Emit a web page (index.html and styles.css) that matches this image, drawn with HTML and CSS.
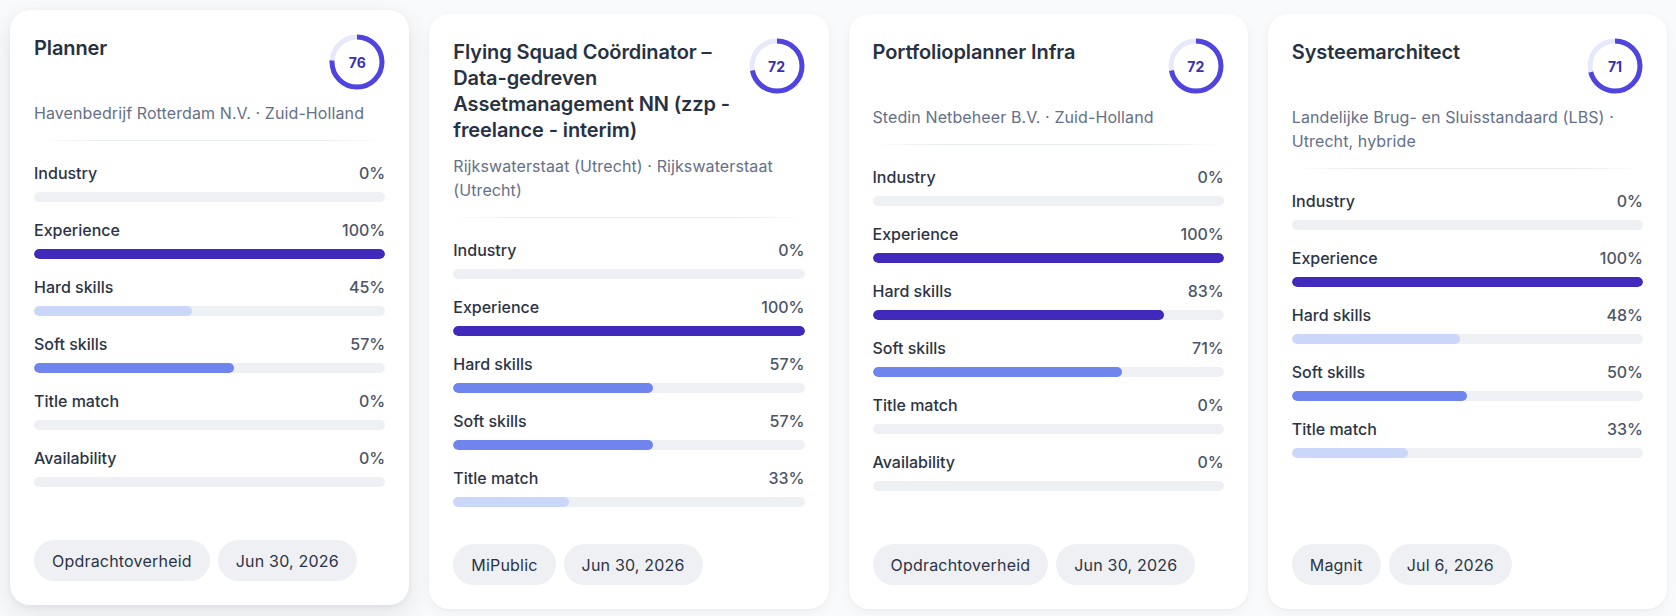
FILE: index.html
```html
<!DOCTYPE html>
<html lang="nl">
<head>
<meta charset="utf-8">
<title>Matches</title>
<link rel="stylesheet" href="styles.css">
</head>
<body>
<main class="board">

  <article class="card card--raised">
    <header class="card-head">
      <h2 class="card-title">Planner</h2>
      <div class="score">
        <svg class="score-ring" viewBox="0 0 56 56">
          <circle class="score-track" cx="28" cy="28" r="25"></circle>
          <circle class="score-arc" cx="28" cy="28" r="25" pathLength="100" stroke-dasharray="76 100"></circle>
        </svg>
        <span class="score-value">76</span>
      </div>
    </header>
    <p class="card-meta">Havenbedrijf Rotterdam N.V. · Zuid-Holland</p>
    <div class="card-rule"></div>
    <ul class="metrics">
      <li class="metric"><div class="metric-row"><span>Industry</span><span class="metric-pct">0%</span></div><div class="metric-track"><div class="metric-fill" style="width:0%"></div></div></li>
      <li class="metric"><div class="metric-row"><span>Experience</span><span class="metric-pct">100%</span></div><div class="metric-track"><div class="metric-fill metric-fill--high" style="width:100%"></div></div></li>
      <li class="metric"><div class="metric-row"><span>Hard skills</span><span class="metric-pct">45%</span></div><div class="metric-track"><div class="metric-fill metric-fill--low" style="width:45%"></div></div></li>
      <li class="metric"><div class="metric-row"><span>Soft skills</span><span class="metric-pct">57%</span></div><div class="metric-track"><div class="metric-fill metric-fill--mid" style="width:57%"></div></div></li>
      <li class="metric"><div class="metric-row"><span>Title match</span><span class="metric-pct">0%</span></div><div class="metric-track"><div class="metric-fill" style="width:0%"></div></div></li>
      <li class="metric"><div class="metric-row"><span>Availability</span><span class="metric-pct">0%</span></div><div class="metric-track"><div class="metric-fill" style="width:0%"></div></div></li>
    </ul>
    <footer class="tags">
      <span class="tag">Opdrachtoverheid</span>
      <span class="tag">Jun 30, 2026</span>
    </footer>
  </article>

  <article class="card">
    <header class="card-head">
      <h2 class="card-title">Flying Squad Coördinator – Data-gedreven Assetmanagement NN (zzp - freelance - interim)</h2>
      <div class="score">
        <svg class="score-ring" viewBox="0 0 56 56">
          <circle class="score-track" cx="28" cy="28" r="25"></circle>
          <circle class="score-arc" cx="28" cy="28" r="25" pathLength="100" stroke-dasharray="72 100"></circle>
        </svg>
        <span class="score-value">72</span>
      </div>
    </header>
    <p class="card-meta">Rijkswaterstaat (Utrecht) · Rijkswaterstaat (Utrecht)</p>
    <div class="card-rule"></div>
    <ul class="metrics">
      <li class="metric"><div class="metric-row"><span>Industry</span><span class="metric-pct">0%</span></div><div class="metric-track"><div class="metric-fill" style="width:0%"></div></div></li>
      <li class="metric"><div class="metric-row"><span>Experience</span><span class="metric-pct">100%</span></div><div class="metric-track"><div class="metric-fill metric-fill--high" style="width:100%"></div></div></li>
      <li class="metric"><div class="metric-row"><span>Hard skills</span><span class="metric-pct">57%</span></div><div class="metric-track"><div class="metric-fill metric-fill--mid" style="width:57%"></div></div></li>
      <li class="metric"><div class="metric-row"><span>Soft skills</span><span class="metric-pct">57%</span></div><div class="metric-track"><div class="metric-fill metric-fill--mid" style="width:57%"></div></div></li>
      <li class="metric"><div class="metric-row"><span>Title match</span><span class="metric-pct">33%</span></div><div class="metric-track"><div class="metric-fill metric-fill--low" style="width:33%"></div></div></li>
    </ul>
    <footer class="tags">
      <span class="tag">MiPublic</span>
      <span class="tag">Jun 30, 2026</span>
    </footer>
  </article>

  <article class="card">
    <header class="card-head">
      <h2 class="card-title">Portfolioplanner Infra</h2>
      <div class="score">
        <svg class="score-ring" viewBox="0 0 56 56">
          <circle class="score-track" cx="28" cy="28" r="25"></circle>
          <circle class="score-arc" cx="28" cy="28" r="25" pathLength="100" stroke-dasharray="72 100"></circle>
        </svg>
        <span class="score-value">72</span>
      </div>
    </header>
    <p class="card-meta">Stedin Netbeheer B.V. · Zuid-Holland</p>
    <div class="card-rule"></div>
    <ul class="metrics">
      <li class="metric"><div class="metric-row"><span>Industry</span><span class="metric-pct">0%</span></div><div class="metric-track"><div class="metric-fill" style="width:0%"></div></div></li>
      <li class="metric"><div class="metric-row"><span>Experience</span><span class="metric-pct">100%</span></div><div class="metric-track"><div class="metric-fill metric-fill--high" style="width:100%"></div></div></li>
      <li class="metric"><div class="metric-row"><span>Hard skills</span><span class="metric-pct">83%</span></div><div class="metric-track"><div class="metric-fill metric-fill--high" style="width:83%"></div></div></li>
      <li class="metric"><div class="metric-row"><span>Soft skills</span><span class="metric-pct">71%</span></div><div class="metric-track"><div class="metric-fill metric-fill--mid" style="width:71%"></div></div></li>
      <li class="metric"><div class="metric-row"><span>Title match</span><span class="metric-pct">0%</span></div><div class="metric-track"><div class="metric-fill" style="width:0%"></div></div></li>
      <li class="metric"><div class="metric-row"><span>Availability</span><span class="metric-pct">0%</span></div><div class="metric-track"><div class="metric-fill" style="width:0%"></div></div></li>
    </ul>
    <footer class="tags">
      <span class="tag">Opdrachtoverheid</span>
      <span class="tag">Jun 30, 2026</span>
    </footer>
  </article>

  <article class="card">
    <header class="card-head">
      <h2 class="card-title">Systeemarchitect</h2>
      <div class="score">
        <svg class="score-ring" viewBox="0 0 56 56">
          <circle class="score-track" cx="28" cy="28" r="25"></circle>
          <circle class="score-arc" cx="28" cy="28" r="25" pathLength="100" stroke-dasharray="71 100"></circle>
        </svg>
        <span class="score-value">71</span>
      </div>
    </header>
    <p class="card-meta">Landelijke Brug- en Sluisstandaard (LBS) · Utrecht, hybride</p>
    <div class="card-rule"></div>
    <ul class="metrics">
      <li class="metric"><div class="metric-row"><span>Industry</span><span class="metric-pct">0%</span></div><div class="metric-track"><div class="metric-fill" style="width:0%"></div></div></li>
      <li class="metric"><div class="metric-row"><span>Experience</span><span class="metric-pct">100%</span></div><div class="metric-track"><div class="metric-fill metric-fill--high" style="width:100%"></div></div></li>
      <li class="metric"><div class="metric-row"><span>Hard skills</span><span class="metric-pct">48%</span></div><div class="metric-track"><div class="metric-fill metric-fill--low" style="width:48%"></div></div></li>
      <li class="metric"><div class="metric-row"><span>Soft skills</span><span class="metric-pct">50%</span></div><div class="metric-track"><div class="metric-fill metric-fill--mid" style="width:50%"></div></div></li>
      <li class="metric"><div class="metric-row"><span>Title match</span><span class="metric-pct">33%</span></div><div class="metric-track"><div class="metric-fill metric-fill--low" style="width:33%"></div></div></li>
    </ul>
    <footer class="tags">
      <span class="tag">Magnit</span>
      <span class="tag">Jul 6, 2026</span>
    </footer>
  </article>

</main>
</body>
</html>
```

FILE: styles.css
```css
* {
  box-sizing: border-box;
}

html, body {
  margin: 0;
  height: 100%;
}

body {
  background: #f9fafb;
  font-family: "Inter", "Noto Sans", sans-serif;
  color: #2b3445;
  -webkit-font-smoothing: antialiased;
}

.board {
  display: grid;
  grid-template-columns: repeat(4, 1fr);
  gap: 20px;
  padding: 14px 9px 7px 10px;
  height: 616px;
}

/* card */
.card {
  display: flex;
  flex-direction: column;
  background: #ffffff;
  border-radius: 20px;
  padding: 24px;
  box-shadow: 0 1px 3px rgba(16, 24, 40, 0.04), 0 4px 14px rgba(16, 24, 40, 0.04);
}

.card--raised {
  transform: translateY(-4px);
  box-shadow: 0 2px 6px rgba(16, 24, 40, 0.05), 0 10px 28px rgba(16, 24, 40, 0.09);
}

.card-head {
  display: flex;
  align-items: flex-start;
  justify-content: space-between;
  gap: 16px;
}

.card-title {
  margin: 0;
  padding-top: 1px;
  font-size: 20px;
  line-height: 26px;
  font-weight: 600;
  letter-spacing: -0.1px;
  color: #283142;
}

/* score ring */
.score {
  position: relative;
  flex: 0 0 56px;
  width: 56px;
  height: 56px;
}

.score-ring {
  display: block;
  width: 56px;
  height: 56px;
  transform: rotate(-90deg);
}

.score-track,
.score-arc {
  fill: none;
  stroke-width: 5;
}

.score-track {
  stroke: #e7e9fb;
}

.score-arc {
  stroke: #4f44e0;
}

.score-value {
  position: absolute;
  inset: 0;
  display: flex;
  align-items: center;
  justify-content: center;
  font-size: 14px;
  font-weight: 700;
  color: #3b2fb5;
}

/* company + place */
.card-meta {
  margin: 11px 0 0;
  font-size: 16px;
  line-height: 24px;
  letter-spacing: 0.1px;
  color: #64708a;
}

.card-rule {
  height: 1px;
  margin: 15px 0 20px;
  background: linear-gradient(90deg, rgba(226, 230, 236, 0) 0%, #e8ebf0 20%, #e8ebf0 80%, rgba(226, 230, 236, 0) 100%);
}

/* metric list */
.metrics {
  list-style: none;
  margin: 0;
  padding: 0;
  display: flex;
  flex-direction: column;
  gap: 16px;
}

.metric-row {
  display: flex;
  justify-content: space-between;
  font-size: 16px;
  line-height: 24px;
  font-weight: 500;
  color: #2b3445;
}

.metric-pct {
  color: #4b5567;
  font-weight: 500;
}

.metric-track {
  margin-top: 7px;
  height: 10px;
  border-radius: 999px;
  background: #eff0f4;
  overflow: hidden;
}

.metric-fill {
  height: 100%;
  border-radius: 999px;
}

.metric-fill--high {
  background: #4029bb;
}

.metric-fill--mid {
  background: #6f84ec;
}

.metric-fill--low {
  background: #cbd7f8;
}

/* source + deadline */
.tags {
  margin-top: auto;
  display: flex;
  gap: 8px;
}

.tag {
  display: inline-flex;
  align-items: center;
  height: 41px;
  padding: 0 18px;
  border-radius: 999px;
  background: #eff0f4;
  font-size: 16px;
  letter-spacing: 0.2px;
  color: #2b3445;
}
```
